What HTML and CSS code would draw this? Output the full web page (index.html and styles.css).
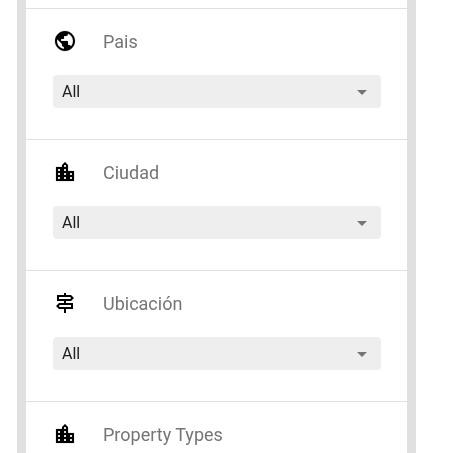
FILE: index.html
```html
<!DOCTYPE html>
<html lang="en">
<head>
    <meta charset="UTF-8">
    <title>Filtros</title>
    <link rel="stylesheet" href="styles.css">
</head>
<body>
    <div class="panel">
        <div class="filter">
            <div class="filter-head">
                <svg class="icon icon-solid" viewBox="0 0 24 24"><path d="M12 2C6.48 2 2 6.48 2 12s4.48 10 10 10 10-4.48 10-10S17.52 2 12 2zm-1 17.93c-3.95-.49-7-3.85-7-7.93 0-.62.08-1.21.21-1.79L9 15v1c0 1.1.9 2 2 2v1.93zm6.9-2.54c-.26-.81-1-1.39-1.9-1.39h-1v-3c0-.55-.45-1-1-1H8v-2h2c.55 0 1-.45 1-1V7h2c1.1 0 2-.9 2-2v-.41c2.93 1.19 5 4.06 5 7.41 0 2.08-.8 3.97-2.1 5.39z"/></svg>
                <span class="filter-label">Pais</span>
            </div>
            <div class="dropdown">
                <span>All</span>
                <svg class="arrow" viewBox="0 0 24 24"><path d="M7 10l5 5 5-5z"/></svg>
            </div>
        </div>

        <div class="filter">
            <div class="filter-head">
                <svg class="icon icon-solid" viewBox="0 0 24 24"><path d="M15 11V5l-3-3-3 3v2H3v14h18V11h-6zm-8 8H5v-2h2v2zm0-4H5v-2h2v2zm0-4H5V9h2v2zm6 8h-2v-2h2v2zm0-4h-2v-2h2v2zm0-4h-2V9h2v2zm0-4h-2V5h2v2zm6 12h-2v-2h2v2zm0-4h-2v-2h2v2z"/></svg>
                <span class="filter-label">Ciudad</span>
            </div>
            <div class="dropdown">
                <span>All</span>
                <svg class="arrow" viewBox="0 0 24 24"><path d="M7 10l5 5 5-5z"/></svg>
            </div>
        </div>

        <div class="filter">
            <div class="filter-head">
                <svg class="icon" viewBox="0 0 24 24"><path d="M13 10h5l3-3-3-3h-5V2h-2v2H4v6h7v2H6l-3 3 3 3h5v4h2v-4h7v-6h-7v-2zM6 6h11.17l1 1-1 1H6V6zm12 10H6.83l-1-1 1-1H18v2z"/></svg>
                <span class="filter-label">Ubicación</span>
            </div>
            <div class="dropdown">
                <span>All</span>
                <svg class="arrow" viewBox="0 0 24 24"><path d="M7 10l5 5 5-5z"/></svg>
            </div>
        </div>

        <div class="filter">
            <div class="filter-head">
                <svg class="icon icon-solid" viewBox="0 0 24 24"><path d="M15 11V5l-3-3-3 3v2H3v14h18V11h-6zm-8 8H5v-2h2v2zm0-4H5v-2h2v2zm0-4H5V9h2v2zm6 8h-2v-2h2v2zm0-4h-2v-2h2v2zm0-4h-2V9h2v2zm0-4h-2V5h2v2zm6 12h-2v-2h2v2zm0-4h-2v-2h2v2z"/></svg>
                <span class="filter-label">Property Types</span>
            </div>
        </div>
    </div>
</body>
</html>
```

FILE: styles.css
```css
html, body {
    height: 100%;
    overflow: hidden;
}

body {
    margin: 0;
    background: white;
    font-family: Roboto, "Liberation Sans", sans-serif;
}

.panel {
    width: 381px;
    height: 100%;
    margin-left: 17px;
    padding-top: 8px;
    border-left: 9px solid #e0e0e0;
    border-right: 9px solid #e0e0e0;
    background: white;
}

.filter {
    height: 130px;
    padding: 0 26px 0 27px;
    border-top: 1px solid #e0e0e0;
    will-change: transform;
}

.filter-head {
    display: flex;
    align-items: center;
    gap: 26px;
    height: 64px;
    margin-bottom: 2px;
}

.icon {
    width: 24px;
    height: 24px;
    flex: none;
}

.icon-solid {
    stroke: black;
    stroke-width: 0.15px;
}

.filter-label {
    font-size: 18px;
    color: #757575;
}

.dropdown {
    display: flex;
    align-items: center;
    justify-content: space-between;
    height: 33px;
    padding: 0 7px 0 9px;
    border-radius: 4px;
    background: #eeeeee;
    font-size: 16px;
    color: #212121;
}

.arrow {
    width: 24px;
    height: 24px;
    fill: #757575;
}
```
